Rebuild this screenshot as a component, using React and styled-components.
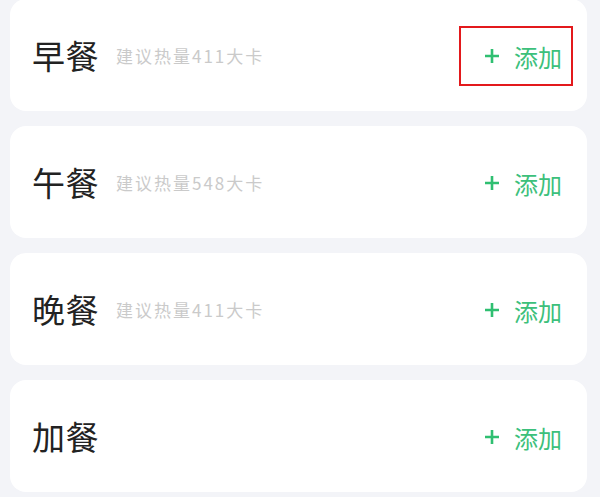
import React from "react";
import styled, { createGlobalStyle } from "styled-components";

const GlobalStyle = createGlobalStyle`
  html, body {
    margin: 0;
    padding: 0;
    background: #f3f4f8;
    font-family: "Noto Sans CJK SC", "Noto Sans", sans-serif;
  }
`;

const meals = [
  { name: "早餐", kcal: 411, active: true },
  { name: "午餐", kcal: 548 },
  { name: "晚餐", kcal: 411 },
  { name: "加餐" },
];

function App() {
  return (
    <>
      <GlobalStyle />
      <Page>
        {meals.map((m) => (
          <Card key={m.name}>
            <Title>{m.name}</Title>
            {m.kcal && <Hint>建议热量{m.kcal}大卡</Hint>}
            <AddButton $active={m.active}>
              <PlusIcon viewBox="0 0 16 16">
                <path d="M8 1v14M1 8h14" />
              </PlusIcon>
              添加
            </AddButton>
          </Card>
        ))}
      </Page>
    </>
  );
}

export default App;

const Page = styled.div`
  height: 497px;
  overflow: hidden;
  display: flex;
  flex-direction: column;
  gap: 15px;
  padding: 0 13px 0 10px;
  margin-top: -1px;
`;

const Card = styled.div`
  flex: none;
  height: 112px;
  background: #ffffff;
  border-radius: 16px;
  display: flex;
  align-items: center;
  padding: 0 14px 0 22px;
  box-sizing: border-box;
`;

const Title = styled.span`
  font-size: 33px;
  color: #222222;
  font-weight: 400;
  letter-spacing: 0.5px;
`;

const Hint = styled.span`
  margin-left: 17px;
  font-size: 17px;
  color: #cacaca;
  letter-spacing: 2px;
`;

const AddButton = styled.div`
  margin-left: auto;
  height: 60px;
  margin-top: 2px;
  box-sizing: border-box;
  display: flex;
  align-items: center;
  gap: 14px;
  padding: 0 9px 0 23px;
  border: 2px solid ${(p) => (p.$active ? "#e3191c" : "transparent")};
  color: #3cc07b;
  font-size: 24px;
`;

const PlusIcon = styled.svg`
  width: 16px;
  height: 16px;
  stroke: #2fbf71;
  stroke-width: 2.6;
  fill: none;
`;
